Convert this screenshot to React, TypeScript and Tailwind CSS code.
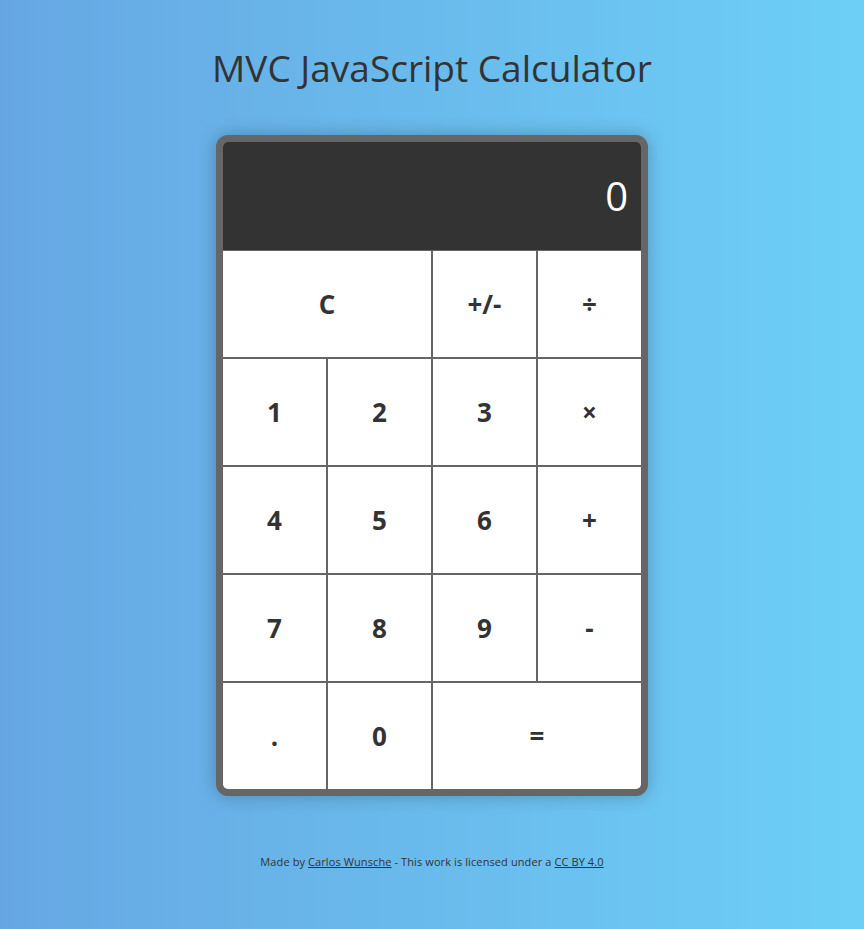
const keys: { label: string; wide?: boolean }[] = [
  { label: 'C', wide: true },
  { label: '+/-' },
  { label: '÷' },
  { label: '1' },
  { label: '2' },
  { label: '3' },
  { label: '×' },
  { label: '4' },
  { label: '5' },
  { label: '6' },
  { label: '+' },
  { label: '7' },
  { label: '8' },
  { label: '9' },
  { label: '-' },
  { label: '.' },
  { label: '0' },
  { label: '=', wide: true },
];

const App = () => {
  return (
    <div className="min-h-screen w-full bg-gradient-to-r from-[#66a7e3] to-[#6dcff6] font-['Open_Sans',sans-serif] text-[#333] flex flex-col items-center">
      <h1 className="mt-[45px] text-[37px] leading-[46px]">MVC JavaScript Calculator</h1>

      <div className="mt-[44px] w-[432px] rounded-[12px] border-[7px] border-[#666] bg-[#666] shadow-[0_0_18px_rgba(0,0,0,0.25)] overflow-hidden">
        <div className="h-[108px] bg-[#333] rounded-t-[5px] flex items-center justify-end pr-[13px]">
          <span className="text-white text-[40px] leading-none">0</span>
        </div>
        <div className="grid grid-cols-4 auto-rows-[106px] gap-[2px] pt-[1px]">
          {keys.map((k) => (
            <button
              key={k.label}
              className={
                'bg-white flex items-center justify-center text-[26px] font-bold text-[#333] ' +
                (k.wide ? 'col-span-2' : '')
              }
            >
              {k.label}
            </button>
          ))}
        </div>
      </div>

      <p className="mt-[58px] text-[11px] tracking-[0.1px] text-[#333]">
        Made by <a className="underline">Carlos Wunsche</a> - This work is licensed under a{' '}
        <a className="underline">CC BY 4.0</a>
      </p>
    </div>
  );
};

export default App;
